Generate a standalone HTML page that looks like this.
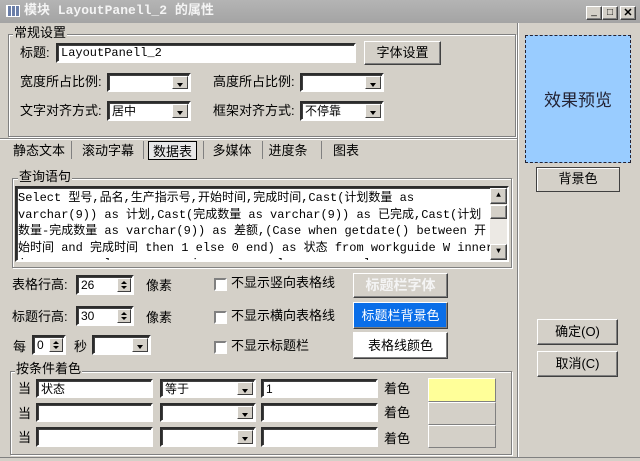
<!DOCTYPE html><html><head><meta charset="utf-8"><style>
*{box-sizing:border-box;margin:0;padding:0}
body{width:640px;height:461px;background:#d4d0c8;font:12px "Liberation Sans","Noto Sans CJK SC",sans-serif;color:#000;position:relative;overflow:hidden}
.a{position:absolute}
.in{position:absolute;background:#fff;border:2px inset #fff;border-color:#808080 #fff #fff #808080;box-shadow:inset 1px 1px 0 #404040;padding:1px 3px;white-space:nowrap;font-size:12px;line-height:14px}
.btn{position:absolute;background:#d4d0c8;border:1px solid;border-color:#fff #404040 #404040 #fff;box-shadow:inset -1px -1px 0 #808080;text-align:center;font-size:13px}
.dd{position:absolute;right:1px;top:1px;bottom:1px;width:16px;background:#d4d0c8;border:1px solid;border-color:#fff #404040 #404040 #fff}
.dd:after{content:"";position:absolute;left:4px;top:6px;border:3px solid transparent;border-top:4px solid #000;border-bottom:0}
.grp{position:absolute;border:1px solid #808080;box-shadow:1px 1px 0 #fff,inset 1px 1px 0 #fff}
.gl{position:absolute;background:#d4d0c8;font-size:13px;padding:0 1px;line-height:14px}
.lb{position:absolute;font-size:13px;white-space:nowrap;line-height:16px}
.cb{position:absolute;width:13px;height:13px;background:#fff;border:2px solid;border-color:#808080 #fff #fff #808080}
.sp{position:absolute;right:1px;top:1px;bottom:1px;width:14px;background:#d4d0c8;border:1px solid;border-color:#fff #404040 #404040 #fff}
.sp:before{content:"";position:absolute;left:3px;top:2px;border:3px solid transparent;border-bottom:3px solid #000;border-top:0}
.sp:after{content:"";position:absolute;left:3px;bottom:2px;border:3px solid transparent;border-top:3px solid #000;border-bottom:0}
.tab{position:absolute;top:141px;height:20px;font-size:13px;line-height:19px;text-align:center}
</style></head><body>
<div class="a" style="left:0;top:0;width:640px;height:23px;background:linear-gradient(#b4b4b4,#a4a4a4)"></div>
<div class="a" style="left:6px;top:5px;width:14px;height:12px;border:1px solid #fff;background:repeating-linear-gradient(90deg,#fff 0 1px,transparent 1px 4px),#6a7ea8"></div>
<div class="a" style="left:24px;top:3px;color:#f4f4f4;font:bold 13px 'Liberation Mono','Noto Sans CJK SC',monospace;line-height:16px">模块 LayoutPanell_2 的属性</div>
<div class="btn" style="left:586px;top:6px;width:16px;height:14px;font-size:10px;line-height:10px">_</div>
<div class="btn" style="left:602px;top:6px;width:16px;height:14px;font-size:10px;line-height:12px">□</div>
<div class="btn" style="left:620px;top:6px;width:16px;height:14px;font-size:11px;line-height:12px;font-weight:bold">✕</div>

<div class="grp" style="left:8px;top:34px;width:508px;height:103px"></div>
<div class="gl" style="left:13px;top:26px">常规设置</div>
<div class="lb" style="left:20px;top:45px">标题:</div>
<div class="in" style="left:56px;top:43px;width:300px;height:20px;font-family:'Liberation Mono',monospace;font-size:12px">LayoutPanell_2</div>
<div class="btn" style="left:364px;top:41px;width:77px;height:24px;line-height:22px">字体设置</div>
<div class="lb" style="left:20px;top:74px">宽度所占比例:</div>
<div class="in" style="left:107px;top:73px;width:84px;height:19px"><div class="dd"></div></div>
<div class="lb" style="left:213px;top:74px">高度所占比例:</div>
<div class="in" style="left:300px;top:73px;width:84px;height:19px"><div class="dd"></div></div>
<div class="lb" style="left:20px;top:103px">文字对齐方式:</div>
<div class="in" style="left:107px;top:101px;width:84px;height:20px">居中<div class="dd"></div></div>
<div class="lb" style="left:213px;top:103px">框架对齐方式:</div>
<div class="in" style="left:300px;top:101px;width:84px;height:20px">不停靠<div class="dd"></div></div>

<div class="a" style="left:0;top:138px;width:517px;height:1px;background:#808080"></div>
<div class="a" style="left:0;top:139px;width:517px;height:1px;background:#fff"></div>
<div class="tab" style="left:8px;width:62px">静态文本</div>
<div class="a" style="left:71px;top:141px;width:1px;height:18px;background:#808080"></div>
<div class="tab" style="left:74px;width:68px">滚动字幕</div>
<div class="a" style="left:143px;top:141px;width:1px;height:18px;background:#808080"></div>
<div class="tab" style="left:148px;top:141px;width:49px;height:19px;border:1px solid #000;background:#e8e8e8">数据表</div>
<div class="a" style="left:203px;top:141px;width:1px;height:18px;background:#808080"></div>
<div class="tab" style="left:204px;width:56px">多媒体</div>
<div class="a" style="left:262px;top:141px;width:1px;height:18px;background:#808080"></div>
<div class="tab" style="left:264px;width:48px">进度条</div>
<div class="a" style="left:321px;top:141px;width:1px;height:18px;background:#808080"></div>
<div class="tab" style="left:326px;width:40px">图表</div>

<div class="a" style="left:517px;top:23px;width:1px;height:438px;background:#808080"></div>
<div class="a" style="left:518px;top:23px;width:1px;height:438px;background:#fff"></div>

<div class="a" style="left:525px;top:35px;width:106px;height:128px;background:#99ccff;border:1px dashed #223"></div>
<div class="a" style="left:525px;top:86px;width:106px;text-align:center;font-size:17px;color:#223">效果预览</div>
<div class="btn" style="left:536px;top:167px;width:84px;height:25px;line-height:22px;border-color:#404040;box-shadow:inset 1px 1px 0 #fff">背景色</div>

<div class="grp" style="left:12px;top:178px;width:500px;height:90px"></div>
<div class="gl" style="left:18px;top:170px">查询语句</div>
<div class="in" style="left:15px;top:186px;width:494px;height:76px;padding:2px 20px 0 1px;font-family:'Liberation Mono','Noto Sans CJK SC',monospace;font-size:12px;line-height:16.5px;white-space:pre;overflow:hidden">Select 型号,品名,生产指示号,开始时间,完成时间,Cast(计划数量 as
varchar(9)) as 计划,Cast(完成数量 as varchar(9)) as 已完成,Cast(计划
数量-完成数量 as varchar(9)) as 差额,(Case when getdate() between 开
始时间 and 完成时间 then 1 else 0 end) as 状态 from workguide W inner
j     o     l     o     j     a     l     o     l
<div class="a" style="right:0;top:0;width:17px;height:72px;background:#ece9e4"><div class="btn" style="left:0;top:0;width:17px;height:16px;font-size:8px;line-height:14px">▲</div><div class="btn" style="left:0;top:17px;width:17px;height:14px"></div><div class="btn" style="left:0;top:56px;width:17px;height:16px;font-size:8px;line-height:14px">▼</div></div></div>

<div class="lb" style="left:12px;top:277px">表格行高:</div>
<div class="in" style="left:76px;top:275px;width:58px;height:20px">26<div class="sp"></div></div>
<div class="lb" style="left:146px;top:278px">像素</div>
<div class="lb" style="left:12px;top:309px">标题行高:</div>
<div class="in" style="left:76px;top:306px;width:58px;height:20px">30<div class="sp"></div></div>
<div class="lb" style="left:146px;top:310px">像素</div>
<div class="lb" style="left:13px;top:339px">每</div>
<div class="in" style="left:32px;top:335px;width:34px;height:20px">0<div class="sp"></div></div>
<div class="lb" style="left:74px;top:339px">秒</div>
<div class="in" style="left:92px;top:335px;width:59px;height:20px"><div class="dd"></div></div>

<div class="cb" style="left:214px;top:278px"></div><div class="lb" style="left:231px;top:275px">不显示竖向表格线</div>
<div class="cb" style="left:214px;top:311px"></div><div class="lb" style="left:231px;top:308px">不显示横向表格线</div>
<div class="cb" style="left:214px;top:341px"></div><div class="lb" style="left:231px;top:338px">不显示标题栏</div>

<div class="btn" style="left:353px;top:273px;width:95px;height:25px;line-height:23px;color:#f4f4f4;font-size:14px;font-weight:bold">标题栏字体</div>
<div class="btn" style="left:353px;top:302px;width:95px;height:27px;line-height:25px;background:#0a6ee8;color:#fff">标题栏背景色</div>
<div class="btn" style="left:353px;top:332px;width:95px;height:27px;line-height:25px;background:#fff">表格线颜色</div>

<div class="grp" style="left:10px;top:371px;width:502px;height:84px"></div>
<div class="gl" style="left:15px;top:362px">按条件着色</div>
<div class="lb" style="left:18px;top:381px">当</div><div class="in" style="left:36px;top:379px;width:117px;height:19px">状态</div>
<div class="in" style="left:160px;top:379px;width:96px;height:19px">等于<div class="dd"></div></div>
<div class="in" style="left:261px;top:379px;width:117px;height:19px">1</div>
<div class="lb" style="left:384px;top:381px">着色</div>
<div class="a" style="left:428px;top:378px;width:68px;height:24px;background:#ffff99;border:1px solid;border-color:#fff #808080 #808080 #fff"></div>
<div class="lb" style="left:18px;top:406px">当</div><div class="in" style="left:36px;top:403px;width:117px;height:19px"></div>
<div class="in" style="left:160px;top:403px;width:96px;height:19px"><div class="dd"></div></div>
<div class="in" style="left:261px;top:403px;width:117px;height:19px"></div>
<div class="lb" style="left:384px;top:405px">着色</div>
<div class="a" style="left:428px;top:402px;width:68px;height:23px;border:1px solid;border-color:#fff #808080 #808080 #fff"></div>
<div class="lb" style="left:18px;top:430px">当</div><div class="in" style="left:36px;top:427px;width:117px;height:20px"></div>
<div class="in" style="left:160px;top:427px;width:96px;height:20px"><div class="dd"></div></div>
<div class="in" style="left:261px;top:427px;width:117px;height:20px"></div>
<div class="lb" style="left:384px;top:431px">着色</div>
<div class="a" style="left:428px;top:425px;width:68px;height:23px;border:1px solid;border-color:#fff #808080 #808080 #fff"></div>

<div class="btn" style="left:537px;top:319px;width:81px;height:26px;line-height:24px">确定(O)</div>
<div class="btn" style="left:537px;top:351px;width:81px;height:26px;line-height:24px">取消(C)</div>
<div class="a" style="left:0;top:457px;width:640px;height:4px;border-top:1px solid #808080;background:#d4d0c8"></div>
</body></html>
